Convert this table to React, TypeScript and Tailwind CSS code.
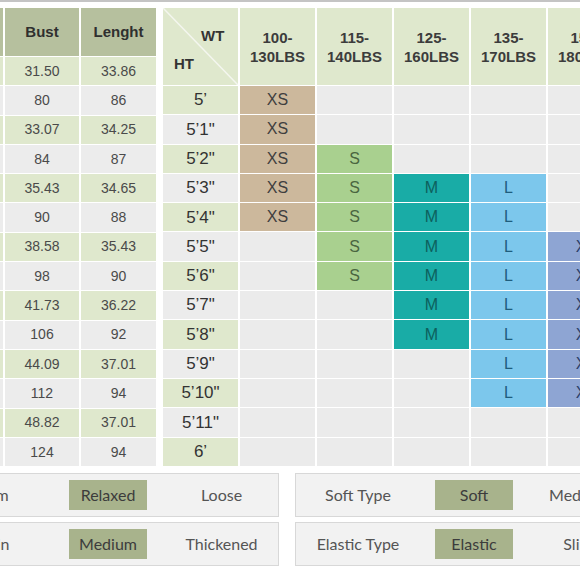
import React from 'react';

const bodyRows = [
  ['31.50', '33.86'],
  ['80', '86'],
  ['33.07', '34.25'],
  ['84', '87'],
  ['35.43', '34.65'],
  ['90', '88'],
  ['38.58', '35.43'],
  ['98', '90'],
  ['41.73', '36.22'],
  ['106', '92'],
  ['44.09', '37.01'],
  ['112', '94'],
  ['48.82', '37.01'],
  ['124', '94'],
];

const heights = ['5’', '5’1"', '5’2"', '5’3"', '5’4"', '5’5"', '5’6"', '5’7"', '5’8"', '5’9"', '5’10"', '5’11"', '6’'];

// weight columns, with the height rows each size covers
const weights = [
  { top: '100-', bottom: '130LBS', size: 'XS', from: 0, to: 4 },
  { top: '115-', bottom: '140LBS', size: 'S', from: 2, to: 6 },
  { top: '125-', bottom: '160LBS', size: 'M', from: 3, to: 8 },
  { top: '135-', bottom: '170LBS', size: 'L', from: 3, to: 10 },
  { top: '150-', bottom: '180LBS', size: 'XL', from: 5, to: 10 },
];

const sizeClass: Record<string, string> = {
  XS: 'bg-[#ccb89c] text-[#3f3f3f]',
  S: 'bg-[#a9d08f] text-[#4a6640]',
  M: 'bg-[#19aca6] text-[#0d605d]',
  L: 'bg-[#7cc7ec] text-[#1f5d7d]',
  XL: 'bg-[#8ea5d3] text-[#2b3f6a]',
};

const rowBg = (i: number) => (i % 2 === 0 ? 'bg-[#dfe8cd]' : 'bg-[#ececec]');

const MeasureTable = () => (
  <div className="grid grid-cols-[3px_74px_75px] grid-rows-[48px_repeat(14,28.3px)] gap-x-[2px] gap-y-px shrink-0">
    <div className="bg-[#b6c09e]" />
    <div className="bg-[#b6c09e] flex items-center justify-center text-[15px] font-semibold text-[#2f2f2f]">Bust</div>
    <div className="bg-[#b6c09e] flex items-center justify-center text-[15px] font-semibold text-[#2f2f2f]">Lenght</div>
    {bodyRows.map((r, i) => (
      <React.Fragment key={i}>
        <div className={rowBg(i)} />
        <div className={`${rowBg(i)} flex items-center justify-center text-[14px] text-[#4a4a4a]`}>{r[0]}</div>
        <div className={`${rowBg(i)} flex items-center justify-center text-[14px] text-[#4a4a4a]`}>{r[1]}</div>
      </React.Fragment>
    ))}
  </div>
);

const SizeTable = () => (
  <div className="grid grid-cols-[repeat(6,75px)] grid-rows-[77px_repeat(13,28.3px)] gap-x-[2px] gap-y-px shrink-0">
    <div className="relative bg-[#dfe8cd] text-[15px] font-semibold text-[#333]">
      <svg className="absolute inset-0 w-full h-full" preserveAspectRatio="none" viewBox="0 0 75 77">
        <line x1="0" y1="0" x2="75" y2="77" stroke="#f4f6ef" strokeWidth="1.5" />
      </svg>
      <span className="absolute left-[38px] top-[17px]">WT</span>
      <span className="absolute left-[11px] top-[45px]">HT</span>
    </div>
    {weights.map((w) => (
      <div key={w.top} className="bg-[#dfe8cd] flex flex-col items-center justify-center text-[15px] font-semibold leading-[19px] text-[#3c3c3c]">
        <span>{w.top}</span>
        <span>{w.bottom}</span>
      </div>
    ))}
    {heights.map((h, i) => (
      <React.Fragment key={h}>
        <div className={`${rowBg(i)} flex items-center justify-center text-[17px] text-[#333]`}>{h}</div>
        {weights.map((w) => {
          const on = i >= w.from && i <= w.to;
          return (
            <div
              key={w.top}
              className={`flex items-center justify-center text-[16px] ${on ? sizeClass[w.size] : 'bg-[#ebebeb]'}`}
            >
              {on ? w.size : ''}
            </div>
          );
        })}
      </React.Fragment>
    ))}
  </div>
);

const OptionBox = ({ cols, items, active }: { cols: string; items: string[]; active: number }) => (
  <div className={`grid ${cols} h-[44px] items-center border border-[#d8d8d8] bg-[#f2f2f2] shrink-0`}>
    {items.map((t, i) => (
      <div key={t} className="flex justify-center">
        {i === active ? (
          <span className="w-[78px] h-[30px] flex items-center justify-center bg-[#a8b38c] text-[#3c3c3c]">{t}</span>
        ) : (
          <span className="text-[#555] whitespace-nowrap">{t}</span>
        )}
      </div>
    ))}
  </div>
);

export default function App() {
  return (
    <div className="w-[580px] h-[580px] overflow-hidden bg-white flex flex-col font-['Liberation_Sans',Arial,sans-serif]">
      <div className="h-[2px] bg-[#c4c4c4] shrink-0" />
      <div className="flex mt-[6px] gap-x-[7px]">
        <MeasureTable />
        <SizeTable />
      </div>
      <div className="flex flex-col gap-y-[5px] mt-[7px] font-['Lato',sans-serif] text-[16px]">
        <div className="flex gap-x-[16px] ml-[-64px]">
          <OptionBox cols="grid-cols-[114px_114px_113px]" items={['Slim', 'Relaxed', 'Loose']} active={1} />
          <OptionBox cols="grid-cols-[124px_108px_100px]" items={['Soft Type', 'Soft', 'Medium']} active={1} />
        </div>
        <div className="flex gap-x-[16px] ml-[-64px]">
          <OptionBox cols="grid-cols-[114px_114px_113px]" items={['Thin', 'Medium', 'Thickened']} active={1} />
          <OptionBox cols="grid-cols-[124px_108px_100px]" items={['Elastic Type', 'Elastic', 'Slim']} active={1} />
        </div>
      </div>
    </div>
  );
}
